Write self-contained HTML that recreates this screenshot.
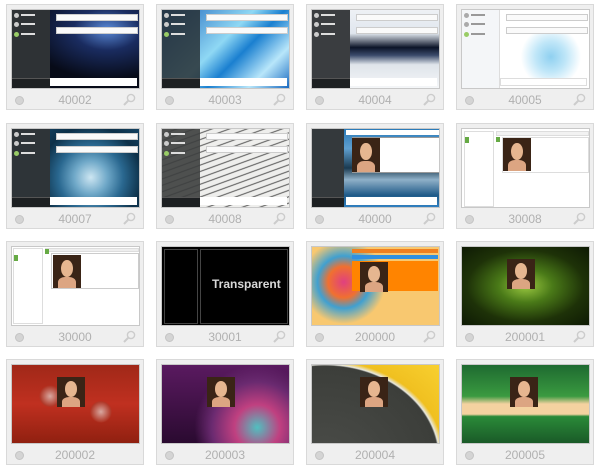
<!DOCTYPE html>
<html><head><meta charset="utf-8"><style>
*{margin:0;padding:0;box-sizing:border-box}
body{width:600px;height:446px;background:#fff;position:relative;overflow:hidden;font-family:"Liberation Sans",sans-serif}
.c{position:absolute;width:138px;height:106px;background:#efefef;border:1px solid #d9d9d9}
.s{position:absolute;left:4px;top:4px;width:129px;height:80px;overflow:hidden;border:1px solid #c8c8c8}
.l{position:absolute;left:0;right:0;top:88px;text-align:center;font-size:12px;color:#b0b0b0}
.d{position:absolute;left:8px;top:91px;width:9px;height:9px;border-radius:50%;background:#d4d4d4;border:1px solid #c4c4c4}
.m{position:absolute;right:7px;top:88px;width:13px;height:13px}
.lp{position:absolute;left:0;top:0;width:38px;height:100%;background:#2e3235}
.lp i{position:absolute;left:2px;width:5px;height:5px;border-radius:50%;background:#ccc}
.lp b{position:absolute;left:9px;width:14px;height:2px;background:#ddd}
.bot{position:absolute;left:0;bottom:0;width:38px;height:10px;background:#1d2022;border-top:1px solid #555}
.msg{position:absolute;left:44px;width:82px;height:7px;background:#fafafa;border:1px solid #ccc}
.ib{position:absolute;left:38px;right:2px;bottom:2px;height:8px;background:#fff}
.ph{position:absolute;background:#3a2416;overflow:hidden}
.ph:before{content:"";position:absolute;left:30%;top:14%;width:42%;height:52%;border-radius:50%;background:#e6b690}
.ph:after{content:"";position:absolute;left:18%;top:68%;width:64%;height:40%;border-radius:40% 40% 0 0;background:#dca582}
</style></head><body>

<div class="c" style="left:6px;top:4px"><div class="s" style="background:radial-gradient(ellipse at 75% 25%,#5a8ad8 0,#1a2c60 25%,#070b18 60%)">
<div class="lp" style="background:#2e3235"><i style="top:3px"></i><b style="top:4px"></b><i style="top:12px"></i><b style="top:13px"></b><i style="top:22px;background:#9c6"></i><b style="top:23px"></b><div class="bot"></div></div>
<div class="msg" style="top:4px"></div><div class="msg" style="top:17px"></div><div class="ib"></div></div>
<div class="d"></div><div class="l">40002</div><svg class="m" viewBox="0 0 13 13"><circle cx="8" cy="5" r="3.6" fill="none" stroke="#ccc" stroke-width="1.4"/><path d="M5.5 7.5L1 12" stroke="#ccc" stroke-width="2"/></svg></div>

<div class="c" style="left:156px;top:4px"><div class="s" style="background:linear-gradient(135deg,#1b5fb8,#8fd8f4 45%,#1a7fd0 60%,#b8e6fa 80%,#1a6ac0)">
<div class="lp" style="background:rgba(40,48,52,.85)"><i style="top:3px"></i><b style="top:4px"></b><i style="top:12px"></i><b style="top:13px"></b><i style="top:22px;background:#9c6"></i><b style="top:23px"></b><div class="bot"></div></div>
<div class="msg" style="top:4px"></div><div class="msg" style="top:17px"></div><div class="ib"></div></div>
<div class="d"></div><div class="l">40003</div><svg class="m" viewBox="0 0 13 13"><circle cx="8" cy="5" r="3.6" fill="none" stroke="#ccc" stroke-width="1.4"/><path d="M5.5 7.5L1 12" stroke="#ccc" stroke-width="2"/></svg></div>

<div class="c" style="left:306px;top:4px"><div class="s" style="background:linear-gradient(180deg,#eef1f5 0,#e0e6ee 30%,#0c1428 48%,#3a4a6a 58%,#dfe4ea 70%,#f4f6f8)">
<div class="lp" style="background:#3a3d40"><i style="top:3px"></i><b style="top:4px"></b><i style="top:12px"></i><b style="top:13px"></b><i style="top:22px"></i><b style="top:23px"></b><div class="bot"></div></div>
<div class="msg" style="top:4px"></div><div class="msg" style="top:17px"></div><div class="ib"></div></div>
<div class="d"></div><div class="l">40004</div><svg class="m" viewBox="0 0 13 13"><circle cx="8" cy="5" r="3.6" fill="none" stroke="#ccc" stroke-width="1.4"/><path d="M5.5 7.5L1 12" stroke="#ccc" stroke-width="2"/></svg></div>

<div class="c" style="left:456px;top:4px"><div class="s" style="background:radial-gradient(circle at 70% 60%,#8fd0f0 0,#bfe6f8 15%,#fff 30%),radial-gradient(circle at 20% 70%,#a8dcf4 0,#fff 25%);background-color:#fff">
<div class="lp" style="background:#f4f6f8;border-right:1px solid #ddd"><i style="top:3px;background:#aaa"></i><b style="top:4px;background:#999"></b><i style="top:12px;background:#aaa"></i><b style="top:13px;background:#999"></b><i style="top:22px;background:#9c6"></i><b style="top:23px;background:#999"></b></div>
<div class="msg" style="top:4px"></div><div class="msg" style="top:17px"></div><div class="ib" style="border:1px solid #ddd"></div></div>
<div class="d"></div><div class="l">40005</div><svg class="m" viewBox="0 0 13 13"><circle cx="8" cy="5" r="3.6" fill="none" stroke="#ccc" stroke-width="1.4"/><path d="M5.5 7.5L1 12" stroke="#ccc" stroke-width="2"/></svg></div>

<div class="c" style="left:6px;top:123px"><div class="s" style="background:radial-gradient(circle at 62% 62%,#cde6f2 0,#6fa8c8 18%,#2a6890 35%,#0d3048 55%,#16486a 80%)">
<div class="lp" style="background:#2e3438"><i style="top:3px"></i><b style="top:4px"></b><i style="top:12px"></i><b style="top:13px"></b><i style="top:22px;background:#9c6"></i><b style="top:23px"></b><div class="bot"></div></div>
<div class="msg" style="top:4px"></div><div class="msg" style="top:17px"></div><div class="ib"></div></div>
<div class="d"></div><div class="l">40007</div><svg class="m" viewBox="0 0 13 13"><circle cx="8" cy="5" r="3.6" fill="none" stroke="#ccc" stroke-width="1.4"/><path d="M5.5 7.5L1 12" stroke="#ccc" stroke-width="2"/></svg></div>

<div class="c" style="left:156px;top:123px"><div class="s" style="background:repeating-linear-gradient(160deg,#eeeeec 0,#eeeeec 4px,#555 5px,#eeeeec 6px)">
<div class="lp" style="background:rgba(60,62,62,.9)"><i style="top:3px"></i><b style="top:4px"></b><i style="top:12px"></i><b style="top:13px"></b><i style="top:22px;background:#9c6"></i><b style="top:23px"></b><div class="bot"></div></div>
<div class="msg" style="top:4px"></div><div class="msg" style="top:17px"></div><div class="ib"></div></div>
<div class="d"></div><div class="l">40008</div><svg class="m" viewBox="0 0 13 13"><circle cx="8" cy="5" r="3.6" fill="none" stroke="#ccc" stroke-width="1.4"/><path d="M5.5 7.5L1 12" stroke="#ccc" stroke-width="2"/></svg></div>

<div class="c" style="left:306px;top:123px"><div class="s" style="background:linear-gradient(180deg,#2a7ab8 0,#5fa0d0 25%,#1a3a50 50%,#8fb0c8 65%,#1f5a88 85%,#3080c0)">
<div class="lp" style="background:#34393c;width:32px"><div class="bot" style="width:32px"></div></div>
<div style="position:absolute;left:34px;top:1px;width:93px;height:5px;background:#fff"></div>
<div style="position:absolute;left:40px;top:8px;width:88px;height:36px;background:#fff;border:1px solid #999"></div>
<div class="ph" style="left:40px;top:9px;width:28px;height:34px"></div>
<div class="ib" style="left:34px"></div></div>
<div class="d"></div><div class="l">40000</div><svg class="m" viewBox="0 0 13 13"><circle cx="8" cy="5" r="3.6" fill="none" stroke="#ccc" stroke-width="1.4"/><path d="M5.5 7.5L1 12" stroke="#ccc" stroke-width="2"/></svg></div>

<div class="c" style="left:456px;top:123px"><div class="s" style="background:#fff">
<div style="position:absolute;left:2px;top:2px;width:30px;height:76px;border:1px solid #ddd"></div>
<div style="position:absolute;left:3px;top:8px;width:4px;height:6px;background:#6a4"></div>
<div style="position:absolute;left:34px;top:2px;width:93px;height:5px;background:#f2f2f2;border:1px solid #ddd"></div>
<div style="position:absolute;left:34px;top:8px;width:4px;height:5px;background:#6a4"></div>
<div style="position:absolute;left:40px;top:8px;width:87px;height:36px;border:1px solid #ddd"></div>
<div class="ph" style="left:41px;top:9px;width:28px;height:33px"></div></div>
<div class="d"></div><div class="l">30008</div><svg class="m" viewBox="0 0 13 13"><circle cx="8" cy="5" r="3.6" fill="none" stroke="#ccc" stroke-width="1.4"/><path d="M5.5 7.5L1 12" stroke="#ccc" stroke-width="2"/></svg></div>

<div class="c" style="left:6px;top:241px"><div class="s" style="background:#fff">
<div style="position:absolute;left:1px;top:1px;width:30px;height:76px;border:1px solid #ddd"></div>
<div style="position:absolute;left:2px;top:8px;width:4px;height:6px;background:#6a4"></div>
<div style="position:absolute;left:33px;top:1px;width:94px;height:4px;background:#eee;border:1px solid #ddd"></div>
<div style="position:absolute;left:33px;top:2px;width:4px;height:5px;background:#6a4"></div>
<div style="position:absolute;left:39px;top:6px;width:88px;height:36px;border:1px solid #ccc"></div>
<div class="ph" style="left:41px;top:8px;width:28px;height:33px"></div></div>
<div class="d"></div><div class="l">30000</div><svg class="m" viewBox="0 0 13 13"><circle cx="8" cy="5" r="3.6" fill="none" stroke="#ccc" stroke-width="1.4"/><path d="M5.5 7.5L1 12" stroke="#ccc" stroke-width="2"/></svg></div>

<div class="c" style="left:156px;top:241px"><div class="s" style="background:#000">
<div style="position:absolute;left:2px;top:2px;width:34px;height:75px;border:1px solid #444"></div>
<div style="position:absolute;left:38px;top:2px;width:88px;height:75px;border:1px solid #444"></div>
<div style="position:absolute;left:50px;top:30px;font-size:12px;font-weight:bold;color:#d8d8d8;white-space:nowrap">Transparent</div></div>
<div class="d"></div><div class="l">30001</div><svg class="m" viewBox="0 0 13 13"><circle cx="8" cy="5" r="3.6" fill="none" stroke="#ccc" stroke-width="1.4"/><path d="M5.5 7.5L1 12" stroke="#ccc" stroke-width="2"/></svg></div>

<div class="c" style="left:306px;top:241px"><div class="s" style="background:radial-gradient(circle at 25% 45%,#e04080 0,#f07030 15%,#40a0d0 25%,#f8c870 40%),linear-gradient(#f8d090,#f0b070)">
<div style="position:absolute;left:40px;top:2px;width:86px;height:4px;background:#f08020"></div>
<div style="position:absolute;left:40px;top:8px;width:86px;height:4px;background:#3090e0"></div>
<div style="position:absolute;left:40px;top:14px;width:86px;height:30px;background:#ff8400"></div>
<div class="ph" style="left:48px;top:15px;width:28px;height:30px"></div></div>
<div class="d"></div><div class="l">200000</div><svg class="m" viewBox="0 0 13 13"><circle cx="8" cy="5" r="3.6" fill="none" stroke="#ccc" stroke-width="1.4"/><path d="M5.5 7.5L1 12" stroke="#ccc" stroke-width="2"/></svg></div>

<div class="c" style="left:456px;top:241px"><div class="s" style="background:radial-gradient(ellipse at 50% 50%,#9ac840 0,#4a7a18 30%,#1e3208 65%,#0e1a04)">
<div class="ph" style="left:45px;top:12px;width:28px;height:30px"></div></div>
<div class="d"></div><div class="l">200001</div><svg class="m" viewBox="0 0 13 13"><circle cx="8" cy="5" r="3.6" fill="none" stroke="#ccc" stroke-width="1.4"/><path d="M5.5 7.5L1 12" stroke="#ccc" stroke-width="2"/></svg></div>

<div class="c" style="left:6px;top:359px"><div class="s" style="background:radial-gradient(circle at 30% 40%,#d8a8a0 0,#b03828 10%,transparent 11%),radial-gradient(circle at 70% 60%,#d8a8a0 0,#b03828 10%,transparent 11%),linear-gradient(#a02818,#c03020 50%,#902010)">
<div class="ph" style="left:45px;top:12px;width:28px;height:30px"></div></div>
<div class="d"></div><div class="l">200002</div></div>

<div class="c" style="left:156px;top:359px"><div class="s" style="background:radial-gradient(circle at 75% 80%,#50c0c0 0,#c04080 20%,#6a2a70 40%,transparent 55%),linear-gradient(#5a1a60,#2a0a30)">
<div class="ph" style="left:45px;top:12px;width:28px;height:30px"></div></div>
<div class="d"></div><div class="l">200003</div></div>

<div class="c" style="left:306px;top:359px"><div class="s" style="background:radial-gradient(ellipse at 10% 120%,#4a4c48 0,#3c3e3a 70%,#e8e8e0 71%,#f0c020 74%,#f8d030)">
<div class="ph" style="left:48px;top:12px;width:28px;height:30px"></div></div>
<div class="d"></div><div class="l">200004</div></div>

<div class="c" style="left:456px;top:359px"><div class="s" style="background:linear-gradient(#1e6a30 0,#3a9a40 40%,#f4d2a0 50%,#f4d2a0 63%,#2a8a38 66%,#1a5a28)">
<div class="ph" style="left:48px;top:12px;width:28px;height:30px"></div></div>
<div class="d"></div><div class="l">200005</div></div>

</body></html>
